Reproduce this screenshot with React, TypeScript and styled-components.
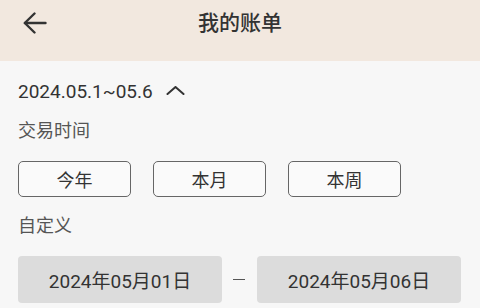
import { styled, createGlobalStyle } from 'styled-components';

const GlobalStyle = createGlobalStyle`
  html, body {
    margin: 0;
    padding: 0;
    background: #f7f7f7;
    font-family: Roboto, "Noto Sans CJK SC", sans-serif;
    color: #333;
  }
`;

const quickRanges = ['今年', '本月', '本周'];

const BackIcon = () => (
  <svg width="24" height="22" viewBox="0 0 24 22" fill="none" stroke="#333" strokeWidth="2.4" strokeLinecap="round" strokeLinejoin="round">
    <path d="M22.5 11H2" />
    <path d="M11.5 1.5L1.8 11l9.7 9.5" />
  </svg>
);

const ChevronUp = () => (
  <svg width="19" height="9" viewBox="0 0 19 9" fill="none" stroke="#333" strokeWidth="2" strokeLinecap="round" strokeLinejoin="round">
    <path d="M1.5 8L9.5 1l8 7" />
  </svg>
);

const App = () => {
  return (
    <Page>
      <GlobalStyle />
      <Header>
        <BackButton aria-label="back">
          <BackIcon />
        </BackButton>
        <Title>我的账单</Title>
        <span />
      </Header>
      <Body>
        <RangeToggle>
          <span>2024.05.1~05.6</span>
          <ChevronUp />
        </RangeToggle>
        <SectionLabel>交易时间</SectionLabel>
        <QuickRow>
          {quickRanges.map((label) => (
            <QuickButton key={label}>{label}</QuickButton>
          ))}
        </QuickRow>
        <SectionLabel $top={17}>自定义</SectionLabel>
        <DateRow>
          <DateBox>2024年05月01日</DateBox>
          <Dash />
          <DateBox>2024年05月06日</DateBox>
        </DateRow>
      </Body>
    </Page>
  );
};

const Page = styled.div`
  width: 480px;
  height: 308px;
  overflow: hidden;
`;

const Header = styled.header`
  height: 61px;
  box-sizing: border-box;
  padding: 0 23px 15px;
  background: #f2e8df;
  display: grid;
  grid-template-columns: 1fr auto 1fr;
  align-items: center;
`;

const BackButton = styled.button`
  justify-self: start;
  border: none;
  background: none;
  padding: 0;
  display: flex;
  cursor: pointer;
`;

const Title = styled.h1`
  margin: 0;
  font-size: 21px;
  font-weight: 500;
  color: #333;
  line-height: 24px;
`;

const Body = styled.main`
  padding: 19px 18px 0;
  display: flex;
  flex-direction: column;
`;

const RangeToggle = styled.div`
  display: flex;
  align-items: center;
  gap: 13px;
  font-size: 19px;
  line-height: 24px;
  color: #333;

  svg {
    margin-top: -4px;
  }
`;

const SectionLabel = styled.div<{ $top?: number }>`
  margin-top: ${({ $top }) => $top ?? 15}px;
  font-size: 18px;
  line-height: 24px;
  color: #555;
`;

const QuickRow = styled.div`
  margin-top: 18px;
  display: flex;
  gap: 22px;
`;

const QuickButton = styled.button`
  width: 113px;
  height: 36px;
  box-sizing: border-box;
  border: 1px solid #666;
  border-radius: 5px;
  background: #fafafa;
  font-family: inherit;
  font-size: 18px;
  color: #333;
  padding: 0;
  cursor: pointer;
`;

const DateRow = styled.div`
  margin-top: 18px;
  display: flex;
  align-items: center;
`;

const DateBox = styled.div`
  width: 204px;
  height: 47px;
  border-radius: 4px;
  background: #dcdcdc;
  display: flex;
  align-items: center;
  justify-content: center;
  font-size: 19px;
  color: #333;
`;

const Dash = styled.span`
  width: 12px;
  height: 1.5px;
  margin: 0 12px 0 11px;
  background: #555;
`;

export default App;
